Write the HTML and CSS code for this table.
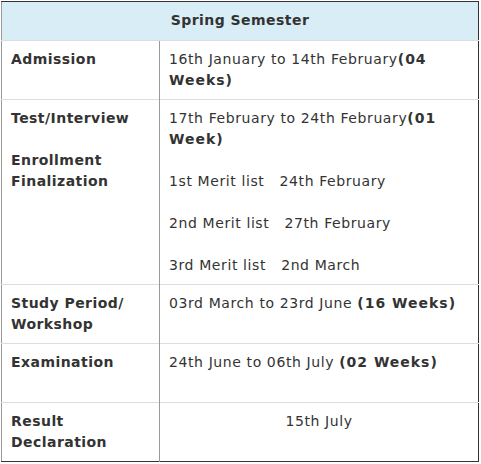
FILE: index.html
```html
<!DOCTYPE html>
<html>
<head>
<meta charset="utf-8">
<link rel="stylesheet" href="styles.css">
</head>
<body>
<table class="schedule">
  <thead>
    <tr><th colspan="2" class="head">Spring Semester</th></tr>
  </thead>
  <tbody>
    <tr>
      <td class="label">Admission</td>
      <td class="value">16th January to 14th February<b>(04 Weeks)</b></td>
    </tr>
    <tr>
      <td class="label">Test/Interview<br><br>Enrollment Finalization</td>
      <td class="value">17th February to 24th February<b>(01 Week)</b><br><br>1st Merit list&nbsp;&nbsp; 24th February<br><br>2nd Merit list&nbsp;&nbsp; 27th February<br><br>3rd Merit list&nbsp;&nbsp; 2nd March</td>
    </tr>
    <tr>
      <td class="label">Study Period/ Workshop</td>
      <td class="value">03rd March to 23rd June <b>(16 Weeks)</b></td>
    </tr>
    <tr>
      <td class="label">Examination</td>
      <td class="value">24th June to 06th July <b>(02 Weeks)</b><br>&nbsp;</td>
    </tr>
    <tr>
      <td class="label">Result Declaration</td>
      <td class="value center">15th July<br>&nbsp;</td>
    </tr>
  </tbody>
</table>
</body>
</html>
```
FILE: styles.css
```css
html, body {
  margin: 0;
  padding: 0;
  background: #fff;
}
body {
  padding: 1px;
  font-family: "DejaVu Sans", Verdana, sans-serif;
  font-size: 14px;
  line-height: 21px;
  letter-spacing: 0.45px;
  color: #333;
}
.schedule {
  width: 478px;
  border-collapse: collapse;
  border-top: 1px solid #333;
  border-right: 1px solid #333;
  border-bottom: 1px solid #333;
  border-left: 1px solid #999;
}
.head {
  background: #d9edf7;
  font-weight: bold;
  text-align: center;
  padding: 8px 9px 9px;
  border-bottom: 1px solid #ddd;
}
td {
  vertical-align: top;
  padding: 8px 9px;
  border-top: 1px solid #ddd;
  text-align: left;
}
.label {
  width: 139px;
  font-weight: bold;
}
.value {
  border-left: 1px solid #999;
  letter-spacing: 0.6px;
}
.center {
  text-align: center;
}
b {
  font-weight: bold;
  letter-spacing: 1px;
}
```
